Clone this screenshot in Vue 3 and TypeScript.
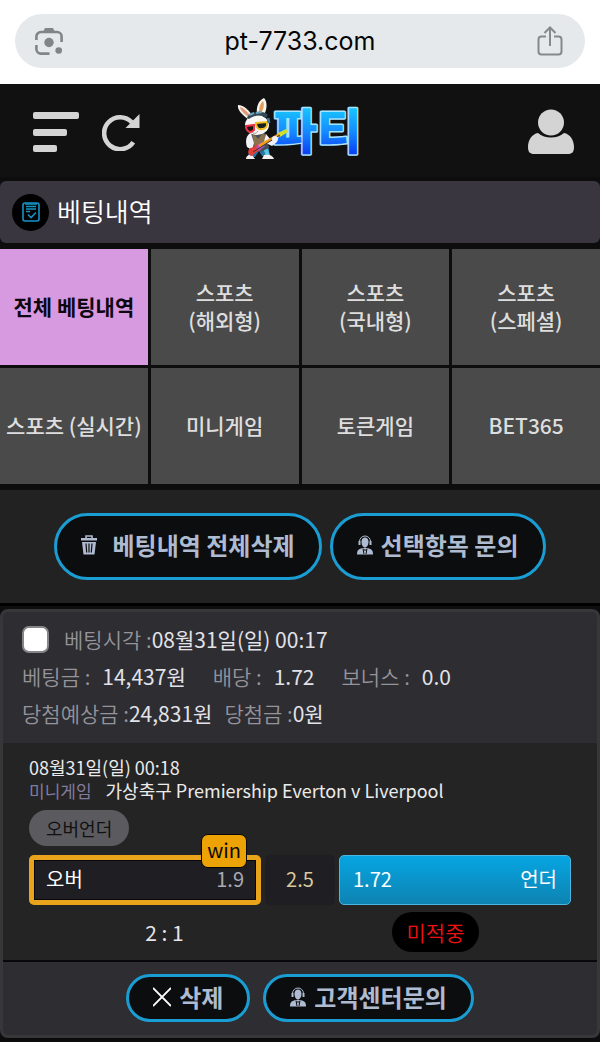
<script setup lang="ts">
import { ref } from 'vue'

interface Tab {
  id: string
  label: string
}

const tabs: Tab[] = [
  { id: 'all', label: '전체 베팅내역' },
  { id: 'overseas', label: '스포츠\n(해외형)' },
  { id: 'domestic', label: '스포츠\n(국내형)' },
  { id: 'special', label: '스포츠\n(스페셜)' },
  { id: 'live', label: '스포츠 (실시간)' },
  { id: 'mini', label: '미니게임' },
  { id: 'token', label: '토큰게임' },
  { id: 'bet365', label: 'BET365' },
]

const activeTab = ref('all')
const selected = ref(false)
</script>

<template>
  <div class="page">
    <div class="browser">
      <div class="address">
        <button class="plain" type="button" aria-label="카메라 검색">
          <svg width="28" height="28" viewBox="0 0 28 28" fill="none" stroke="#808588" stroke-width="2.6">
            <path d="M1.400 13V9.500a4.500 4.500 0 0 1 4.500-4.500h16.200a4.500 4.500 0 0 1 4.500 4.500V15M1.400 18v4.100a4.500 4.500 0 0 0 4.500 4.500H14.500" />
            <path d="M8 5l2-4h8l2 4z" fill="#808588" stroke="none" />
            <circle cx="14" cy="15.500" r="4.700" fill="#808588" stroke="none" />
            <circle cx="23.700" cy="23.500" r="3.300" fill="#808588" stroke="none" />
          </svg>
        </button>
        <span class="url">pt-7733.com</span>
        <button class="plain" type="button" aria-label="공유">
          <svg width="26" height="30" viewBox="0 0 26 30" fill="none" stroke="#85898c" stroke-width="2">
            <path d="M9 10.500H4.500A3 3 0 0 0 1.500 13.500v12a3 3 0 0 0 3 3h17a3 3 0 0 0 3-3V13.500a3 3 0 0 0-3-3H17" />
            <path d="M13 20V2M7.500 7 13 1.500 18.500 7" />
          </svg>
        </button>
      </div>
    </div>

    <header class="nav">
      <div class="nav-left">
        <button class="plain" type="button" aria-label="메뉴">
          <svg width="46" height="42" viewBox="0 0 46 42" fill="#d4d4d4">
            <rect y="1" width="46" height="7" rx="2" />
            <rect y="18" width="34" height="7" rx="2" />
            <rect y="34" width="24" height="7" rx="2" />
          </svg>
        </button>
        <button class="plain" type="button" aria-label="새로고침">
          <svg width="38" height="38" viewBox="0 0 38 38">
            <path d="M31.300 29.300A16 16 0 1 1 30 9.500" fill="none" stroke="#d4d4d4" stroke-width="4.600" />
            <path d="M37.500 1v14H23.500z" fill="#d4d4d4" />
          </svg>
        </button>
      </div>
      <a class="logo" href="#" aria-label="파티">
        <svg width="134" height="80" viewBox="0 -7 134 80">
          <defs>
            <linearGradient id="brand" x1="0" y1="0" x2="0" y2="1">
              <stop offset="0.200" stop-color="#18c8ff" />
              <stop offset="0.550" stop-color="#168bff" />
              <stop offset="0.850" stop-color="#0b43f5" />
            </linearGradient>
          </defs>
          <text x="36" y="50" class="wordmark" fill="url(#brand)">파티</text>
          <!-- ears -->
          <path d="M11 20C4 15 0 10 1 6c6 0 11 5 15 12z" fill="#f5f2ef" />
          <path d="M10 17C5 13 3 10 3 8c4 1 8 5 10 9z" fill="#e39a78" />
          <path d="M20 16c-1-8 1-14 7-17 4 4 3 13-1 18z" fill="#f8f4ee" />
          <path d="M22 14c0-6 1-9 4-12 2 4 0 9-2 12z" fill="#dfa05f" />
          <!-- legs and shoes -->
          <path d="M13 46h18l2 11h-8l-3-5-4 6h-7z" fill="#2476a8" />
          <path d="M26 49l5 1 2 7h-4z" fill="#56c7dc" />
          <path d="M9 60c0-3 3-5 6-4l3 4zm16 0l2-4c4-1 9 0 10 4z" fill="#f4eeee" />
          <!-- body -->
          <path d="M12 34l7-3 10 4 3 14-9 4-11-4z" fill="#465056" />
          <path d="M15 33l6 7 6-7 3 12-12 5z" fill="#89724d" />
          <path d="M14 34c-5 2-6 8-4 14l5 3 2-7zM29 35l5 6 4-3 2 5-5 4-8-4z" fill="#f2f1f7" />
          <!-- head -->
          <ellipse cx="20" cy="26" rx="12" ry="10" fill="#faf8f6" />
          <path d="M10 19c1-6 16-9 21-3l-2 3c-5-4-11-3-17 1z" fill="#344958" />
          <path d="M12 16l5-2m2 0 6-1" stroke="#69a3bb" stroke-width="2" />
          <path d="M9 27l8-1v5c-4 4-8 1-8-4z" fill="#17151a" stroke="#eb3342" stroke-width="2" />
          <path d="M19 24l11-1c1 5-2 7-5 7-4 1-6-2-6-6z" fill="#18211e" stroke="#f3bb1b" stroke-width="2" />
          <path d="M15 33c2 2 4 2 6-1" fill="none" stroke="#a88688" stroke-width="1" />
          <path d="M31 19l1 5" stroke="#42749b" stroke-width="3" />
          <!-- guitar -->
          <path d="M13 49c3 0 5-2 7-4l4 5c-3 3-6 3-9 7-4 0-5-5-2-8z" fill="#e63d38" />
          <path d="M19 48l5-5 4 4-6 5z" fill="#b351c1" />
          <path d="M22 47L45 34" stroke="#ef9d20" stroke-width="3" />
          <path d="M41 34l8-4 2 3-8 5z" fill="#d1df28" />
          <path d="M16 53L43 36" stroke="#3b382d" stroke-width="1" />
          <circle cx="38" cy="40" r="3" fill="#f1f1fa" />
        </svg>
      </a>
      <button class="plain" type="button" aria-label="내 정보">
        <svg width="46" height="46" viewBox="0 0 46 46" fill="#d4d4d4">
          <circle cx="23" cy="13.500" r="13" />
          <path d="M10 24c7 6 19 6 26 0 6 1 10 7 10 14 0 5-2 7-6 7H6c-4 0-6-2-6-7 0-7 4-13 10-14z" />
        </svg>
      </button>
    </header>

    <h1 class="title">
      <span class="title-icon">
        <svg width="18" height="20" viewBox="0 0 18 20" fill="none" stroke="#1593c4" stroke-width="1.600">
          <rect x="1" y="1" width="16" height="18" rx="2" />
          <path d="M3 2h12M4 4.500h10M4 7h10M4 9.500h4M6 12.500l3 3 5-5" />
        </svg>
      </span>
      <span class="title-text">베팅내역</span>
    </h1>

    <nav class="tabs">
      <button
        v-for="tab in tabs"
        :key="tab.id"
        type="button"
        class="tab"
        :class="{ active: tab.id === activeTab }"
        @click="activeTab = tab.id"
      >{{ tab.label }}</button>
    </nav>

    <section class="actions">
      <button class="pill-button large spaced" type="button">
        <svg width="16" height="20" viewBox="0 0 16 20">
          <path d="M5 3V1h6v2" fill="none" stroke="#aebbd0" stroke-width="1.600" />
          <path d="M0 3h16v2.500H0zM1 7h14l-1.500 12.500h-11z" fill="#aebbd0" />
          <path d="M5 8.500l.7 9M8 8.500v9M11 8.500l-.7 9" stroke="#0c0d0e" stroke-width="1.200" />
        </svg>
        베팅내역 전체삭제
      </button>
      <button class="pill-button large" type="button">
        <svg width="16" height="20" viewBox="0 0 16 20">
          <path d="M2.500 8V6.500a5.500 5.500 0 0 1 11 0V9" fill="none" stroke="#aebbd0" stroke-width="1" />
          <path d="M4.500 6.500C4.500 1 11.500 1 11.500 6.500 11.500 10 10 12.500 8 12.500S4.500 10 4.500 6.500zM1.500 6h2v4h-2zM12.500 6h2v4h-2z" fill="#aebbd0" />
          <path d="M0 19.500c0-4 1-5.500 5.500-6.500h5c4.500 1 5.500 2.500 5.500 6.500z" fill="#aebbd0" />
          <path d="M6 13.500 7 19M10 13.500 9 19M6.500 15h3" stroke="#0c0d0e" stroke-width="1" />
        </svg>
        선택항목 문의
      </button>
    </section>

    <article class="card">
      <div class="summary">
        <div class="line">
          <input id="pick" v-model="selected" class="check" type="checkbox" />
          <label for="pick">베팅시각 :</label>
          <span class="value">08월31일(일) 00:17</span>
        </div>
        <div class="line wide">
          <div class="pair"><span>베팅금 :</span><span class="value">14,437원</span></div>
          <div class="pair"><span>배당 :</span><span class="value">1.72</span></div>
          <div class="pair"><span>보너스 :</span><span class="value">0.0</span></div>
        </div>
        <div class="line near">
          <div>당첨예상금 :<span class="value">24,831원</span></div>
          <div>당첨금 :<span class="value">0원</span></div>
        </div>
      </div>

      <div class="match">
        <div class="match-line">08월31일(일) 00:18</div>
        <div class="match-line game">
          <span class="kind">미니게임</span>
          <span>가상축구 Premiership Everton v Liverpool</span>
        </div>
        <span class="market">오버언더</span>
        <div class="odds">
          <div class="odd over">
            <span>오버</span>
            <span class="rate">1.9</span>
            <span class="win">win</span>
          </div>
          <div class="odd base">2.5</div>
          <div class="odd under">
            <span>1.72</span>
            <span>언더</span>
          </div>
        </div>
        <div class="result">
          <span>2 : 1</span>
          <span><strong class="miss">미적중</strong></span>
        </div>
      </div>

      <div class="card-actions">
        <button class="pill-button" type="button">
          <svg width="18" height="20" viewBox="0 0 18 20">
            <path d="M0 1l18 18M18 1L0 19" stroke="#fff" stroke-width="1.800" />
          </svg>
          삭제
        </button>
        <button class="pill-button" type="button">
          <svg width="16" height="20" viewBox="0 0 16 20">
            <path d="M2.500 8V6.500a5.500 5.500 0 0 1 11 0V9" fill="none" stroke="#aebbd0" stroke-width="1" />
            <path d="M4.500 6.500C4.500 1 11.500 1 11.500 6.500 11.500 10 10 12.500 8 12.500S4.500 10 4.500 6.500zM1.500 6h2v4h-2zM12.500 6h2v4h-2z" fill="#aebbd0" />
            <path d="M0 19.500c0-4 1-5.500 5.500-6.500h5c4.500 1 5.500 2.500 5.500 6.500z" fill="#aebbd0" />
            <path d="M6 13.500 7 19M10 13.500 9 19M6.500 15h3" stroke="#0c0d0e" stroke-width="1" />
          </svg>
          고객센터문의
        </button>
      </div>
    </article>
  </div>
</template>

<style>
body {
  margin: 0;
  background: #0b0b0c;
}
</style>

<style scoped>
.page {
  font-family: "Noto Sans CJK KR", "Noto Sans", sans-serif;
  color: #e6e6ea;
  background: #0d0d0e;
}
.page * {
  box-sizing: border-box;
}
button {
  font-family: inherit;
  cursor: pointer;
}
svg {
  display: block;
  flex: none;
}
.plain {
  padding: 0;
  border: 0;
  background: none;
}
.browser {
  padding: 14px 15px 16px;
  background: #fff;
}
.address {
  display: flex;
  align-items: center;
  justify-content: space-between;
  height: 54px;
  padding: 0 22px 0 20px;
  border-radius: 27px;
  background: #e5e9ec;
}
.url {
  font-family: Inter, sans-serif;
  font-size: 25px;
  line-height: 30px;
  color: #050505;
}
.nav {
  display: grid;
  grid-template-columns: 1fr auto 1fr;
  align-items: center;
  height: 93px;
  padding: 3px 26px 0 33px;
  background: #111;
}
.nav > .plain {
  justify-self: end;
}
.nav-left {
  display: flex;
  align-items: center;
  gap: 23px;
}
.wordmark {
  font-size: 48px;
  font-weight: 900;
  stroke: #a9e4ff;
  stroke-width: 3px;
  stroke-linejoin: round;
  paint-order: stroke;
}
.title {
  display: flex;
  align-items: center;
  gap: 8px;
  height: 62px;
  margin: 4px 0 6px;
  padding: 0 12px;
  border-radius: 6px;
  background: #393640;
  color: #fff;
  font-size: 26px;
  font-weight: 350;
}
.title-text {
  padding-bottom: 4px;
}
.title-icon {
  display: grid;
  place-items: center;
  width: 37px;
  height: 37px;
  border-radius: 50%;
  background: #000;
}
.tabs {
  display: grid;
  grid-template-columns: repeat(4, 1fr);
  gap: 3px;
}
.tab {
  height: 116px;
  padding: 0 0 3px;
  border: 0;
  background: #4a4a4a;
  color: #dedede;
  font-size: 21px;
  font-weight: 500;
  line-height: 28px;
  white-space: pre-line;
}
.tab.active {
  background: #d799e0;
  color: #0d0710;
  font-weight: 700;
}
.actions {
  display: flex;
  justify-content: center;
  gap: 8px;
  margin-top: 6px;
  padding: 23px 0;
  background: #222;
  border-bottom: 3px solid #000;
}
.pill-button {
  display: flex;
  align-items: center;
  gap: 8px;
  height: 48px;
  padding: 0 24px 3px;
  border: 3px solid #1a9dd3;
  border-radius: 34px;
  background: #0c0d0e;
  color: #aebbd0;
  font-size: 24px;
  font-weight: 700;
  line-height: 32px;
}
.pill-button.large {
  height: 67px;
}
.pill-button.spaced {
  gap: 15px;
}
.card {
  margin: 3px 0 4px;
  border: 3px solid #37373a;
  border-radius: 8px;
  background: #2e2d32;
  overflow: hidden;
}
.summary {
  padding: 9px 19px 11px;
  color: #95949b;
  font-size: 21px;
  font-weight: 350;
  line-height: 37px;
}
.line {
  display: flex;
  align-items: center;
}
.wide {
  gap: 27px;
}
.near {
  gap: 12px;
}
.pair {
  display: flex;
  gap: 12px;
}
.value {
  color: #e2e2e8;
  font-weight: 400;
}
.check {
  appearance: none;
  width: 27px;
  height: 27px;
  margin: 0 15px 0 0;
  border: 2px solid #85858a;
  border-radius: 7px;
  background: #fff;
}
.check:checked {
  background: #1a9dd3;
}
.match {
  padding: 13px 26px 8px;
  background: #242424;
  border-bottom: 2px solid #08080a;
}
.match-line {
  font-size: 18px;
  line-height: 23px;
  color: #ebebeb;
}
.game {
  display: flex;
  gap: 14px;
}
.kind {
  font-size: 17px;
  color: #817b9e;
}
.market {
  display: block;
  width: fit-content;
  margin: 8px 0 9px;
  padding: 0 17px;
  border-radius: 18px;
  background: #5b5a5f;
  color: #111;
  font-size: 18px;
  line-height: 36px;
}
.odds {
  display: grid;
  grid-template-columns: 1fr 70px 1fr;
  gap: 4px;
}
.odd {
  position: relative;
  display: flex;
  align-items: center;
  justify-content: space-between;
  height: 50px;
  padding: 0 13px 3px;
  border-radius: 5px;
  background: #1f1e23;
  font-size: 20px;
  color: #fff;
}
.over {
  padding: 0 12px 3px;
  border: 5px solid #e9a41b;
  box-shadow: inset 0 0 0 1px #08080a;
}
.rate {
  color: #aaa8b0;
}
.base {
  justify-content: center;
  color: #d8ca9c;
}
.under {
  border: 1px solid #4db7df;
  background: linear-gradient(#06a5e2, #0e83b2);
}
.win {
  position: absolute;
  top: -26px;
  right: 9px;
  padding: 0 5px 2px;
  border: 1px solid #08080a;
  border-radius: 7px;
  background: #eda205;
  color: #0b0b0b;
  font-size: 20px;
  line-height: 30px;
}
.result {
  display: grid;
  grid-template-columns: 1fr 1fr;
  align-items: center;
  margin-top: 7px;
  text-align: center;
  font-size: 21px;
  line-height: 40px;
}
.miss {
  display: inline-block;
  padding: 0 15px;
  border-radius: 20px;
  background: #000;
  color: #f01010;
  font-weight: 350;
}
.card-actions {
  display: flex;
  justify-content: center;
  gap: 13px;
  padding: 12px 0 13px;
}
</style>
